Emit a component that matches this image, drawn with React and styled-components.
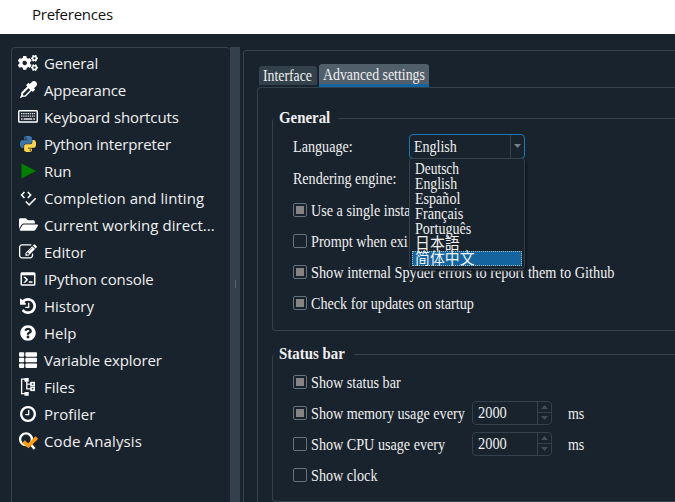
import React from "react";
import styled, { createGlobalStyle } from "styled-components";
import { FaCogs, FaFolderOpen, FaQuestionCircle, FaThList } from "react-icons/fa";

const GlobalStyle = createGlobalStyle`
  * { box-sizing: border-box; }
  body { margin: 0; background: #19232d; overflow: hidden; }
`;

const Window = styled.div`
  display: flex;
  flex-direction: column;
  width: 675px;
  height: 502px;
  overflow: hidden;
  background: #19232d;
  color: #f0f0f0;
`;

const TitleBar = styled.header`
  flex: none;
  height: 34px;
  padding: 3px 0 0 32px;
  background: #fff;
  color: #111;
  font: 15px/22px "Open Sans", "Noto Sans", sans-serif;
  letter-spacing: -0.25px;
`;

const Body = styled.div`
  flex: 1;
  min-height: 0;
  display: flex;
`;

const Sidebar = styled.nav`
  flex: none;
  width: 219px;
  margin: 13px 0 0 11px;
  padding-top: 1px;
  border: 1px solid #32414b;
  border-right: 0;
  border-bottom: 0;
  border-radius: 4px 4px 0 0;
`;

const NavRow = styled.div`
  display: flex;
  align-items: center;
  height: 27px;
  padding-left: 6px;
`;

const IconSlot = styled.span`
  flex: none;
  display: flex;
  align-items: center;
  justify-content: center;
  width: 20px;
  height: 20px;
  margin-right: 6px;
  color: #fff;
`;

const NavLabel = styled.span`
  white-space: nowrap;
  font: 15px/24px "Open Sans", "Noto Sans", sans-serif;
  letter-spacing: ${(p) => p.$ls || 0}px;
`;

const Splitter = styled.div`
  flex: none;
  display: flex;
  align-items: center;
  justify-content: center;
  width: 10px;
  margin-top: 13px;
  padding-top: 19px;
  background: #32414b;
`;

const Grip = styled.span`
  width: 1px;
  height: 8px;
  background: #53636e;
`;

const Page = styled.main`
  flex: 1;
  min-width: 0;
  margin: 16px 0 0 3px;
  padding: 13px 0 0 13px;
  border: 1px solid #32414b;
  border-width: 1px 0 0 1px;
  border-radius: 4px 0 0 0;
  font: 16px/18px "Liberation Serif", "Noto Sans CJK SC", serif;
`;

const Tabs = styled.div`
  display: flex;
  align-items: flex-end;
  gap: 2px;
  height: 23px;
  padding-left: 2px;
`;

const Tab = styled.div`
  height: ${(p) => (p.$active ? 23 : 19)}px;
  width: ${(p) => p.$w}px;
  margin-bottom: ${(p) => (p.$active ? 0 : 2)}px;
  padding: ${(p) => (p.$active ? 2 : 1)}px 0 0 4px;
  border-bottom: ${(p) => (p.$active ? "3px solid #1464a0" : "0")};
  border-radius: 3px 3px 0 0;
  background: ${(p) => (p.$active ? "#505f69" : "#32414b")};
`;

/* Condensed serif face: $sx is the horizontal compression of the glyphs. */
const Text = styled.span`
  display: inline-block;
  white-space: nowrap;
  transform: scaleX(${(p) => p.$sx || 0.885});
  transform-origin: 0 50%;
`;

const Pane = styled.div`
  height: 430px;
  padding: 20px 0 0 14px;
  border: 1px solid #32414b;
  border-width: 1px 0 0 1px;
  border-radius: 4px 0 0 0;
`;

const Group = styled.section`
  display: flex;
  flex-direction: column;
  height: ${(p) => p.$h}px;
  margin-bottom: 13px;
`;

const GroupHead = styled.div`
  display: flex;
  align-items: center;
  height: 20px;
  margin-bottom: -10px;
  padding-left: 7px;
  font-weight: bold;
`;

const GroupTitle = styled.div`
  width: ${(p) => p.$w}px;
`;

const HeadRule = styled.span`
  flex: 1;
  height: 1px;
  background: #32414b;
`;

const GroupBody = styled.div`
  flex: 1;
  padding: ${(p) => p.$top}px 0 0 20px;
  border: 1px solid #32414b;
  border-width: 0 0 1px 1px;
  border-radius: 4px 0 0 4px;
`;

const Row = styled.div`
  display: flex;
  align-items: center;
  height: ${(p) => p.$h || 31}px;
  margin-bottom: ${(p) => p.$gap || 0}px;
`;

const Check = styled.span`
  flex: none;
  width: 14px;
  height: 14px;
  margin: -2px 4px 0 0;
  border: 1px solid #65727b;
  border-radius: 2px;
  background: ${(p) => (p.$on ? "#858482" : "transparent")};
  background-clip: content-box;
  padding: 2px;
`;

const FieldLabel = styled.div`
  width: 116px;
`;

const ComboWrap = styled.div`
  position: relative;
  width: 116px;
  height: 25px;
`;

const Combo = styled.div`
  display: flex;
  height: 25px;
  border: 1px solid #1c79b5;
  border-radius: 4px;
`;

const ComboValue = styled.div`
  flex: 1;
  padding: 3px 0 0 4px;
  border-right: 1px solid #32414b;
`;

const ComboArrow = styled.div`
  display: flex;
  align-items: center;
  justify-content: center;
  width: 13px;
  padding-bottom: 2px;
`;

const Popup = styled.div`
  position: absolute;
  z-index: 2;
  top: 24px;
  left: 0;
  width: 116px;
  height: 111px;
  padding: 2px;
  border: 1px solid #32414b;
  border-radius: 3px;
  background: #19232d;
  box-shadow: 2px 2px 2px #111820;
`;

const Option = styled.div`
  height: 15px;
  width: 110px;
  padding-left: ${(p) => (p.$on ? 2 : 3)}px;
  line-height: ${(p) => (p.$on ? 13 : 15)}px;
  border: ${(p) => (p.$on ? "1px dotted #a9b9b5" : "0")};
  background: ${(p) => (p.$on ? "#1464a0" : "transparent")};
`;

const Spin = styled.div`
  display: flex;
  width: 80px;
  height: 24px;
  margin: -2px 16px 0 0;
  border: 1px solid #32414b;
  border-radius: 4px;
`;

const SpinLabel = styled.div`
  width: 161px;
`;

const SpinValue = styled.div`
  flex: 1;
  padding: 2px 0 0 5px;
  border-right: 1px solid #32414b;
`;

const SpinButtons = styled.div`
  display: grid;
  grid-template-rows: 1fr 1fr;
  width: 13px;
  place-items: center;
  & > :first-child { border-bottom: 1px solid #32414b; }
`;

const SpinButton = styled.div`
  display: flex;
  align-items: center;
  justify-content: center;
  width: 13px;
  height: 11px;
`;

const Arrow = ({ up, color = "#3f4e59" }) => (
  <svg width="7" height="4" viewBox="0 0 7 4">
    <path d={up ? "M0 4L3.5 0L7 4Z" : "M0 0H7L3.5 4Z"} fill={color} />
  </svg>
);

const Glyph = ({ d, w = 18, h = 18, box = "0 0 24 24" }) => (
  <svg width={w} height={h} viewBox={box}><path fill="currentColor" d={d} /></svg>
);

const KeyboardIcon = () => (
  <svg width="20" height="13" viewBox="0 0 20 13">
    <rect x="0.75" y="0.75" width="18.5" height="11.2" rx="0.8" fill="none" stroke="#fff" strokeWidth="1.4" />
    <path stroke="#e8e8e8" strokeWidth="1.3" strokeDasharray="1.4 0.8" d="M3 3.6H17M3 6.2H17" />
    <path stroke="#e8e8e8" strokeWidth="1.3" d="M3 9H4.5M5.5 9H14.3M15.3 9H17" />
  </svg>
);

const snake = "M14.25.18l.9.2.73.26.59.3.45.32.34.34.25.34.16.33.1.3.04.26.02.2-.01.13V8.5l-.05.63-.13.55-.21.46-.26.38-.3.31-.33.25-.35.19-.35.14-.33.1-.3.07-.26.04-.21.02H8.77l-.69.05-.59.14-.5.22-.41.27-.33.32-.27.35-.2.36-.15.37-.1.35-.07.32-.04.27-.02.21v3.06H3.17l-.21-.03-.28-.07-.32-.12-.35-.18-.36-.26-.36-.36-.35-.46-.32-.59-.28-.73-.21-.88-.14-1.05-.05-1.23.06-1.22.16-1.04.24-.87.32-.71.36-.57.4-.44.42-.33.42-.24.4-.16.36-.1.32-.05.24-.01h.16l.06.01h8.16v-.83H6.18l-.01-2.75-.02-.37.05-.34.11-.31.17-.28.25-.26.31-.23.38-.2.44-.18.51-.15.58-.12.64-.1.71-.06.77-.04.84-.02 1.27.05zm-6.3 1.98l-.23.33-.08.41.08.41.23.34.33.22.41.09.41-.09.33-.22.23-.34.08-.41-.08-.41-.23-.33-.33-.22-.41-.09-.41.09z";

const PythonIcon = () => (
  <svg width="16" height="16" viewBox="0 0 24 24">
    <path fill="#3a78ac" d={snake} />
    <path fill="#ffd648" d={snake} transform="rotate(180 12 12)" />
  </svg>
);

const RunIcon = () => (
  <svg width="15" height="16" viewBox="0 0 15 16"><path fill="#008000" d="M0.5 0.5L15 8L0.5 15.5Z" /></svg>
);

const TreeIcon = () => (
  <svg width="16" height="18" viewBox="0 0 16 18">
    <path fill="none" stroke="#fff" strokeWidth="1.3" d="M5 1.2H1.6V15.6H5" />
    <path fill="#fff" d="M4.5 0H8.7V3.7H4.5ZM4.5 14H8.7V17.7H4.5Z" />
    <path fill="none" stroke="#fff" strokeWidth="1.3" d="M6.8 3.5V10.8H10.5M6.8 6.1H10.5" />
    <rect x="11" y="4.6" width="3.2" height="2.9" fill="none" stroke="#fff" strokeWidth="1.6" />
    <rect x="11" y="9.4" width="3.2" height="2.9" fill="none" stroke="#fff" strokeWidth="1.6" />
  </svg>
);

const AnalysisIcon = () => (
  <svg width="20" height="18" viewBox="0 0 20 18">
    <circle cx="8" cy="7.3" r="5.9" fill="none" stroke="#fff" strokeWidth="2.3" />
    <path stroke="#fff" strokeWidth="2.4" d="M12 11.5L16.6 16.9" />
    <path fill="none" stroke="#ff9d0a" strokeWidth="3.6" d="M5.4 9.6L10.4 13.8L18.8 5.6" />
  </svg>
);

const dropperPath = "M1698 94q94 94 94 226.5t-94 225.5l-225 223 104 104q10 10 10 23t-10 23l-210 210q-10 10-23 10t-23-10l-105-105-603 603q-37 37-90 37h-203l-256 128-64-64 128-256v-203q0-53 37-90l603-603-105-105q-10-10-10-23t10-23l210-210q10-10 23-10t23 10l104 104 223-225q93-94 225.5-94t226.5 94zm-1186 1442l576-576-192-192-576 576v192h192z";
const editPath = "M888 1184l116-116-152-152-116 116v56h96v96h56zm440-720q-16-16-33 1l-350 350q-17 17-1 33t33-1l350-350q17-17 1-33zm80 594v190q0 119-84.5 203.5t-203.5 84.5h-832q-119 0-203.5-84.5t-84.5-203.5v-832q0-119 84.5-203.5t203.5-84.5h832q63 0 117 25 15 7 18 23 3 17-9 29l-49 49q-14 14-32 8-23-6-45-6h-832q-66 0-113 47t-47 113v832q0 66 47 113t113 47h832q66 0 113-47t47-113v-126q0-13 9-22l64-64q15-15 35-7t20 29zm-96-738l288 288-672 672h-288v-288zm444 132l-92 92-288-288 92-92q28-28 68-28t68 28l152 152q28 28 28 68t-28 68z";
const historyPath = "M1536 896q0 156-61 298t-164 245-245 164-298 61q-172 0-327-72.5T177 1387q-7-10-6.5-22.5t8.5-20.5l137-138q10-9 25-9 16 2 23 12 73 95 179 147t225 52q104 0 198.5-40.5T1130 1258t109.5-163.5T1280 896t-40.5-198.5T1130 534 966.5 424.5 768 384q-98 0-188 35.5T420 521l137 138q31 30 14 69-17 40-59 40H64q-26 0-45-19T0 704V256q0-42 40-59 39-17 69 14l130 129q107-101 244.5-156.5T768 128q156 0 298 61t245 164 164 245 61 298zM896 608v448q0 14-9 23t-23 9H544q-14 0-23-9t-9-23v-64q0-14 9-23t23-9h224V608q0-14 9-23t23-9h64q14 0 23 9t9 23z";
const clockPath = "M896 544v448q0 14-9 23t-23 9H544q-14 0-23-9t-9-23v-64q0-14 9-23t23-9h224V544q0-14 9-23t23-9h64q14 0 23 9t9 23zm416 352q0-148-73-273t-198-198-273-73-273 73-198 198-73 273 73 273 198 198 273 73 273-73 198-198 73-273zm224 0q0 209-103 385.5T1153.5 1561 768 1664t-385.5-103T103 1281.5 0 896t103-385.5T382.5 231 768 128t385.5 103T1433 510.5 1536 896z";
const consolePath = "M20 19V7H4v12h16m0-16a2 2 0 0 1 2 2v14a2 2 0 0 1-2 2H4a2 2 0 0 1-2-2V5c0-1.11.9-2 2-2h16m-7 14v-2h5v2h-5m-3.42-4L5.57 9H8.4l3.3 3.3c.39.39.39 1.03 0 1.42L8.42 17H5.59l3.99-4Z";
const codeCheckPath = "M6.59 3.41L2 8L6.59 12.6L8 11.18L4.82 8L8 4.82L6.59 3.41M12.41 3.41L11 4.82L14.18 8L11 11.18L12.41 12.6L17 8L12.41 3.41M21.59 11.59L13.5 19.68L9.83 16L8.42 17.41L13.5 22.5L23 13L21.59 11.59Z";

const sections = [
  { label: "General", icon: <FaCogs size={20} />, ls: -0.15 },
  { label: "Appearance", icon: <Glyph d={dropperPath} w={17} h={17} box="0 0 1792 1792" />, ls: -0.2 },
  { label: "Keyboard shortcuts", icon: <KeyboardIcon />, ls: -0.1 },
  { label: "Python interpreter", icon: <PythonIcon />, ls: -0.15 },
  { label: "Run", icon: <RunIcon />, ls: -0.1 },
  { label: "Completion and linting", icon: <Glyph d={codeCheckPath} />, ls: 0.06 },
  { label: "Current working direct...", icon: <FaFolderOpen size={19} />, ls: 0.06 },
  { label: "Editor", icon: <Glyph d={editPath} w={18} h={18} box="0 0 1792 1792" /> },
  { label: "IPython console", icon: <Glyph d={consolePath} />, ls: -0.1 },
  { label: "History", icon: <Glyph d={historyPath} w={16} h={16} box="0 128 1536 1536" /> },
  { label: "Help", icon: <FaQuestionCircle size={16} /> },
  { label: "Variable explorer", icon: <FaThList size={18} />, ls: -0.12 },
  { label: "Files", icon: <TreeIcon /> },
  { label: "Profiler", icon: <Glyph d={clockPath} w={16} h={16} box="0 128 1536 1536" /> },
  { label: "Code Analysis", icon: <AnalysisIcon />, ls: 0.13 },
];

const languages = [
  ["Deutsch", 0.84],
  ["English", 0.86],
  ["Español", 0.88],
  ["Français", 0.89],
  ["Português", 0.88],
  ["日本語", 0.93],
  ["简体中文", 0.93],
];

const CheckRow = ({ on, label, sx }) => (
  <Row><Check $on={on} /><Text $sx={sx}>{label}</Text></Row>
);

const SpinRow = ({ on, label, sx }) => (
  <Row>
    <Check $on={on} />
    <SpinLabel><Text $sx={sx}>{label}</Text></SpinLabel>
    <Spin>
      <SpinValue><Text $sx={0.9}>2000</Text></SpinValue>
      <SpinButtons>
        <SpinButton><Arrow up /></SpinButton>
        <SpinButton><Arrow /></SpinButton>
      </SpinButtons>
    </Spin>
    <Text $sx={0.87}>ms</Text>
  </Row>
);

export default function App() {
  return (
    <Window>
      <GlobalStyle />
      <TitleBar>Preferences</TitleBar>
      <Body>
        <Sidebar>
          {sections.map((s) => (
            <NavRow key={s.label}>
              <IconSlot>{s.icon}</IconSlot>
              <NavLabel $ls={s.ls}>{s.label}</NavLabel>
            </NavRow>
          ))}
        </Sidebar>
        <Splitter><Grip /></Splitter>
        <Page>
          <Tabs>
            <Tab $w={58}><Text $sx={0.86}>Interface</Text></Tab>
            <Tab $active $w={110}><Text $sx={0.865}>Advanced settings</Text></Tab>
          </Tabs>
          <Pane>
            <Group $h={223}>
              <GroupHead><GroupTitle $w={59}><Text $sx={0.93}>General</Text></GroupTitle><HeadRule /></GroupHead>
              <GroupBody $top={12}>
                <Row $h={33}>
                  <FieldLabel><Text>Language:</Text></FieldLabel>
                  <ComboWrap>
                    <Combo>
                      <ComboValue><Text $sx={0.875}>English</Text></ComboValue>
                      <ComboArrow><Arrow color="#797f82" /></ComboArrow>
                    </Combo>
                    <Popup>
                      {languages.map(([name, sx], i) => (
                        <Option key={name} $on={i === 6}><Text $sx={sx}>{name}</Text></Option>
                      ))}
                    </Popup>
                  </ComboWrap>
                </Row>
                <Row $gap={1}><Text $sx={0.878}>Rendering engine:</Text></Row>
                <CheckRow on label="Use a single insta" />
                <CheckRow label="Prompt when exi" />
                <CheckRow on label="Show internal Spyder errors to report them to Github" sx={0.894} />
                <CheckRow on label="Check for updates on startup" />
              </GroupBody>
            </Group>
            <Group $h={158}>
              <GroupHead><GroupTitle $w={75}><Text $sx={0.93}>Status bar</Text></GroupTitle><HeadRule /></GroupHead>
              <GroupBody $top={13}>
                <CheckRow on label="Show status bar" />
                <SpinRow on label="Show memory usage every" />
                <SpinRow label="Show CPU usage every" />
                <CheckRow label="Show clock" />
              </GroupBody>
            </Group>
          </Pane>
        </Page>
      </Body>
    </Window>
  );
}
